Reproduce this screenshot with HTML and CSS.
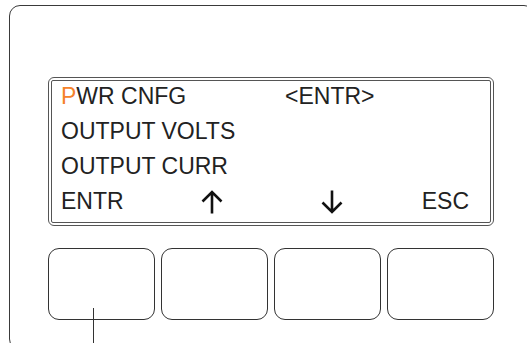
FILE: index.html
```html
<!DOCTYPE html>
<html>
<head>
<meta charset="utf-8"/>
<title>PWR CNFG</title>
<link rel="stylesheet" href="styles.css">
</head>
<body>
    <div id="device">
        <div id="lcd">
            <div id="screen">
                <div id="rows">
                    <div class="row first"><span class="label"><span class="cursor">P</span>WR CNFG</span><span>&lt;ENTR&gt;</span></div>
                    <div class="row">OUTPUT VOLTS</div>
                    <div class="row">OUTPUT CURR</div>
                    <div class="row keys">
                        <span>ENTR</span>
                        <svg class="arrow" viewBox="0 0 24 24"><path d="M12 23.5V2M2.5 11.5L12 2L21.5 11.5"/></svg>
                        <span></span>
                        <svg class="arrow" viewBox="0 0 24 24"><path d="M12 0.5V22M2.5 12.5L12 22L21.5 12.5"/></svg>
                        <span class="esc">ESC</span>
                    </div>
                </div>
            </div>
        </div>
        <div id="buttons">
            <div class="btn"><span class="leader"></span></div>
            <div class="btn"></div>
            <div class="btn"></div>
            <div class="btn"></div>
        </div>
    </div>
</body>
</html>
```
FILE: styles.css
```css
body {
    margin: 0;
    padding: 0;
    overflow: hidden;
    background: #fff;
    font-family: "Liberation Sans", Arial, sans-serif;
    color: #222;
}
#device {
    margin: 5px 0 0 9px;
    width: 526px;
    height: 345px;
    box-sizing: border-box;
    border: 1px solid #3a3a3a;
    border-radius: 11px;
    padding: 71px 0 0 38px;
}
#lcd {
    width: 446px;
    box-sizing: border-box;
    border: 1px solid #555;
    border-radius: 6px;
    padding: 2px;
}
#screen {
    border: 1px solid #555;
    border-radius: 2px;
    padding: 0 21px 3px 9px;
}
#rows {
    margin-top: -2px;
}
.row {
    height: 35px;
    line-height: 35px;
    font-size: 23px;
    white-space: nowrap;
}
.row.first {
    display: flex;
}
.label {
    width: 224px;
}
.cursor {
    color: #f5822a;
}
.keys {
    display: grid;
    grid-template-columns: 139px 24px 96px 24px 1fr;
    align-items: center;
}
.arrow {
    width: 24px;
    height: 24px;
    fill: none;
    stroke: #111;
    stroke-width: 2.6;
    margin-top: 1px;
}
.esc {
    justify-self: end;
}
#buttons {
    display: flex;
    gap: 6px;
    width: 446px;
    margin-top: 22px;
}
.btn {
    flex: 1;
    height: 72px;
    box-sizing: border-box;
    border: 1px solid #333;
    border-radius: 11px;
    position: relative;
}
.leader {
    position: absolute;
    left: 44px;
    top: 59px;
    width: 1px;
    height: 50px;
    background: #333;
}
```
